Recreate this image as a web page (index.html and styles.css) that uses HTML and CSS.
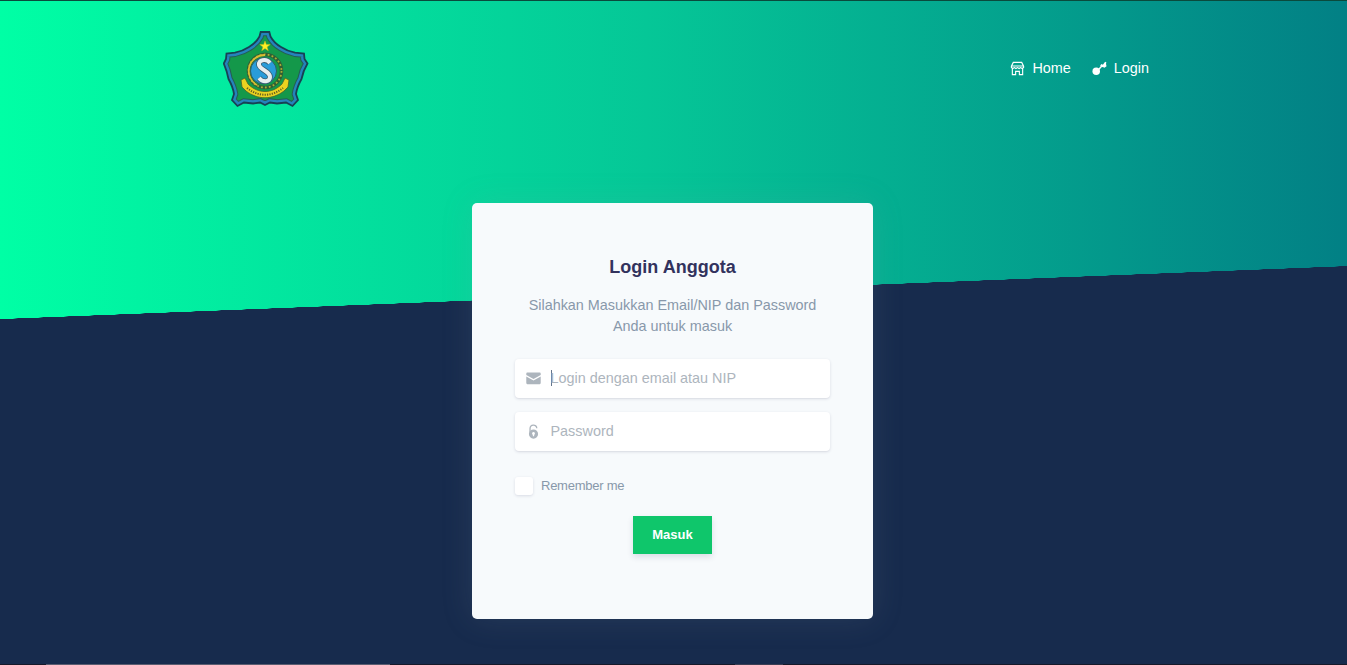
FILE: index.html
```
<!DOCTYPE html>
<html lang="id">
<head>
<meta charset="utf-8">
<title>Login Anggota</title>
<link rel="stylesheet" href="styles.css">
</head>
<body>
<div class="page">
  <header class="navbar">
    <svg class="logo" viewBox="0 0 86 78" aria-label="Logo">
      <defs>
        <path id="shield" d="M37.700 2H46.300L47.500 6.500Q51 13 58 17Q64 21 72 22.700L81 23.500L81.500 29L84.500 33.500Q80 41 78.500 49Q74 57 73 64L75 70L69.500 76L63 72.500L54 73.500L47 72.500L42 75L37 72.500L30 73.500L21 72.500L14.500 76L9 70L11 64Q10 57 5.500 49Q4 41 .800 33.500L3 29L3.500 23.500L12 22.700Q20 21 26 17Q33 13 36.500 6.500Z"/>
        <clipPath id="shield-clip"><use href="#shield"/></clipPath>
      </defs>
      <g clip-path="url(#shield-clip)">
        <use href="#shield" fill="#14984a" stroke="#265c55" stroke-width="8.500"/>
        <use href="#shield" fill="none" stroke="#2484bc" stroke-width="6.500"/>
      </g>
      <use href="#shield" fill="none" stroke="#174153" stroke-width="1.800"/>
      <circle cx="42" cy="41" r="16.500" fill="none" stroke="#315f34" stroke-width="3.500"/>
      <circle cx="42" cy="41" r="16.500" fill="none" stroke="#a9ae34" stroke-width="1.800" stroke-dasharray="1.800 2.200"/>
      <path d="M42 25A16 16 0 0 0 34 55" fill="none" stroke="#d9bd32" stroke-width="1.800"/>
      <circle cx="40.500" cy="41" r="13" fill="#299cda" stroke="#315e65"/>
      <path d="M47 33C43 28 35 30 36 35C37 40 47 41 47 47C47 52 40 53 36 48" fill="none" stroke="#365d72" stroke-width="5.600"/>
      <path d="M47 33C43 28 35 30 36 35C37 40 47 41 47 47C47 52 40 53 36 48" fill="none" stroke="#e7eef0" stroke-width="4"/>
      <path d="M42 11L43.300 14.600H47.200L44.100 17L45.300 20.700L42 18.500L38.700 20.700L39.900 17L36.800 14.600H40.700Z" fill="#fff023" stroke="#c6b51c" stroke-width=".5"/>
      <path d="M22 48L25 54C35 64 49 64 59 54L62 48L66 50L65 57L61 61C49 70 35 70 23 61L19 57L18 50Z" fill="#ead220" stroke="#49632c" stroke-width=".800"/>
      <path d="M24 58C35 67 49 67 60 58" fill="none" stroke="#655e22" stroke-width="2" stroke-dasharray="1.200 1.200"/>
    </svg>
    <nav class="nav-links">
      <a class="nav-link"><svg class="nav-icon" viewBox="0 0 16 16" fill="none" stroke="currentColor" stroke-width="1.200"><path d="M3.500 1.500H12.500L14.500 5.500V7L13 8L11.300 7L9.700 8L8 7L6.300 8L4.700 7L3 8L1.500 7V5.500ZM1.500 5.300H14.500M2.500 8V14.500H6V11H10V14.500H13.500V8"/></svg><span>Home</span></a>
      <a class="nav-link"><svg class="nav-icon" viewBox="0 0 16 16" fill="currentColor"><circle cx="4.500" cy="11" r="4"/><path d="M6.800 8.200L9.200 5.700L8.800 4.600L10.300 3.300L11.600 3.900L14 .800L15.400 1.500L14.900 3L15.500 5.500L13.300 7.300L11.500 6.500L10.200 6.700L8 9.200Z"/></svg><span>Login</span></a>
    </nav>
  </header>
  <main class="card">
    <h1 class="title">Login Anggota</h1>
    <p class="lead">Silahkan Masukkan Email/NIP dan Password<br>Anda untuk masuk</p>
    <form class="form">
      <label class="field">
        <svg class="field-icon" viewBox="0 0 16 16" fill="currentColor"><path d="M1.300 1.500H14.700Q15.700 1.500 15.700 3V4.300L8 8.600L.300 4.300V3Q.300 1.500 1.300 1.500ZM.300 5.800L8 10L15.700 5.800V12.500Q15.700 14 14.700 14H1.300Q.300 14 .300 12.500Z"/></svg>
        <span class="caret"></span><span class="placeholder">Login dengan email atau NIP</span>
      </label>
      <label class="field">
        <svg class="field-icon" viewBox="0 0 16 16"><path d="M4.300 9V5C4.300 .200 11.400 0 11.500 4.500" fill="none" stroke="currentColor" stroke-width="1.400"/><path fill="currentColor" fill-rule="evenodd" d="M8 5.800A4.900 4.900 0 1 1 8 15.600A4.900 4.900 0 1 1 8 5.800ZM8 8.500A1.600 1.600 0 0 0 7.300 11.500V13H8.700V11.500A1.600 1.600 0 0 0 8 8.500Z"/></svg>
        <span class="placeholder">Password</span>
      </label>
      <label class="remember"><span class="checkbox"></span><span class="remember-text">Remember me</span></label>
      <button class="submit" type="button">Masuk</button>
    </form>
  </main>
  <footer class="edge"><span class="edge-long"></span><span class="edge-short"></span></footer>
</div>
</body>
</html>
```
FILE: styles.css
```
* { box-sizing: border-box; }
body { margin: 0; font-family: "Liberation Sans", Arial, sans-serif; }
.page {
  height: 665px;
  overflow: hidden;
  display: flex;
  flex-direction: column;
  align-items: center;
  border-top: 1px solid #0a4a3c;
  background:
    linear-gradient(to bottom right, transparent 50%, #172b4d 50.2%) 0 265px / 100% 53px no-repeat,
    linear-gradient(#172b4d, #172b4d) 0 318px / 100% 400px no-repeat,
    linear-gradient(to right, #00ffa5, #05c797 48%, #028085);
}
.navbar {
  width: 928px;
  height: 202px;
  padding: 29px 1px 0 13px;
  display: flex;
  justify-content: space-between;
  align-items: flex-start;
}
.logo { width: 86px; height: 78px; }
.nav-links { display: flex; gap: 21px; margin-right: -12.5px; padding: 30px 0 0; color: #fff; font-size: 14.4px; line-height: 17px; }
.nav-link { display: flex; align-items: center; gap: 7px; }
.nav-icon { width: 15px; height: 15px; }
.card {
  width: 401px;
  height: 416px;
  margin-right: 2px;
  padding: 53px 43px 0;
  border-radius: 5px;
  background: #f7fafc;
  box-shadow: 0 0 32px rgba(136, 152, 170, .15);
  text-align: center;
}
.title { margin: 0; font-size: 18px; line-height: 22px; color: #32325d; }
.lead { margin: 17px -10px 0; font-size: 14.4px; line-height: 21px; color: #8898aa; }
.form { display: flex; flex-direction: column; margin-top: 22px; }
.field {
  display: flex;
  align-items: center;
  height: 39px;
  margin-bottom: 14px;
  padding: 0 11px;
  border-radius: 4px;
  background: #fff;
  box-shadow: 0 1px 3px rgba(50, 50, 93, .15), 0 1px 0 rgba(0, 0, 0, .02);
  color: #adb5bd;
  font-size: 14.4px;
}
.field-icon { width: 15px; height: 15px; margin-right: 9.5px; }
.placeholder { padding-bottom: 2px; }
.caret { width: 1px; height: 16px; margin: 0 -1px 1px 0; background: #65758b; }
.remember { display: flex; align-items: center; gap: 8px; height: 20px; margin-top: 10px; font-size: 13px; color: #8898aa; }
.remember-text { letter-spacing: -.25px; }
.checkbox { width: 18px; height: 18px; margin-top: 2px; border-radius: 3px; background: #fff; box-shadow: 0 1px 3px rgba(50, 50, 93, .15); }
.submit {
  align-self: center;
  width: 79px;
  height: 38px;
  margin-top: 21px;
  padding: 0 0 2px;
  border: 0;
  background: #0fc66b;
  box-shadow: 0 3px 6px rgba(50, 50, 93, .14);
  color: #fff;
  font: bold 13px "Liberation Sans", Arial, sans-serif;
}
.edge { width: 100%; height: 1px; margin-top: auto; padding-left: 46px; display: flex; gap: 345px; background: #171929; }
.edge-long { width: 344px; background: #5b5d70; }
.edge-short { width: 48px; background: #3b3e53; }
```
